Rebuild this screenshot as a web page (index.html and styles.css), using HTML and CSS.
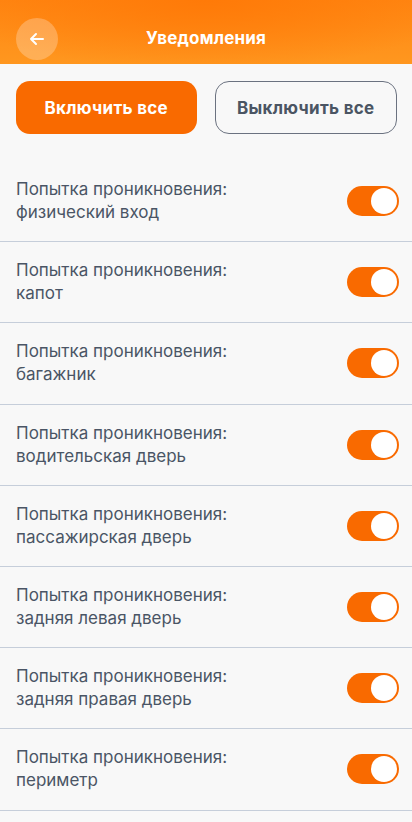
FILE: index.html
```html
<!DOCTYPE html>
<html lang="ru">
<head>
<meta charset="utf-8">
<link rel="stylesheet" href="styles.css">
</head>
<body>
<header class="topbar">
  <button class="back" aria-label="Назад">
    <svg width="18" height="18" viewBox="0 0 18 18" fill="none" stroke="#fff" stroke-width="2" stroke-linecap="round" stroke-linejoin="round"><path d="M15 9H3M8 4L3 9l5 5"/></svg>
  </button>
  <h1 class="title">Уведомления</h1>
</header>
<main class="content">
  <div class="actions">
    <button class="btn btn-primary">Включить все</button>
    <button class="btn btn-outline">Выключить все</button>
  </div>
  <ul class="list">
    <li class="row"><span class="label">Попытка проникновения:<br>физический вход</span><span class="toggle"><span class="knob"></span></span></li>
    <li class="row"><span class="label">Попытка проникновения:<br>капот</span><span class="toggle"><span class="knob"></span></span></li>
    <li class="row"><span class="label">Попытка проникновения:<br>багажник</span><span class="toggle"><span class="knob"></span></span></li>
    <li class="row"><span class="label">Попытка проникновения:<br>водительская дверь</span><span class="toggle"><span class="knob"></span></span></li>
    <li class="row"><span class="label">Попытка проникновения:<br>пассажирская дверь</span><span class="toggle"><span class="knob"></span></span></li>
    <li class="row"><span class="label">Попытка проникновения:<br>задняя левая дверь</span><span class="toggle"><span class="knob"></span></span></li>
    <li class="row"><span class="label">Попытка проникновения:<br>задняя правая дверь</span><span class="toggle"><span class="knob"></span></span></li>
    <li class="row"><span class="label">Попытка проникновения:<br>периметр</span><span class="toggle"><span class="knob"></span></span></li>
  </ul>
</main>
</body>
</html>
```
FILE: styles.css
```css
* { box-sizing: border-box; }
html, body { margin: 0; padding: 0; }
body {
  background: #f8f8f8;
  font-family: Inter, "Noto Sans", "Liberation Sans", sans-serif;
  width: 412px;
  height: 822px;
  overflow: hidden;
}
.topbar {
  height: 64px;
  background: radial-gradient(ellipse 260px 70px at 50% 0%, #ff7a08 0%, rgba(255,122,8,0) 100%),
              linear-gradient(to bottom, #ff8612 0%, #ff971f 100%);
  display: flex;
  align-items: flex-end;
  padding: 0 16px 4px;
  position: relative;
}
.back {
  width: 42px;
  height: 42px;
  border-radius: 50%;
  border: none;
  background: rgba(255,255,255,0.25);
  display: flex;
  align-items: center;
  justify-content: center;
  padding: 0;
  margin: 0;
}
.title {
  position: absolute;
  left: 0;
  right: 0;
  top: 28px;
  margin: 0;
  text-align: center;
  color: #fff;
  font-size: 17px;
  font-weight: 700;
  line-height: 20px;
  letter-spacing: 0.2px;
  pointer-events: none;
}
.content { padding: 17px 0 0; }
.actions {
  display: flex;
  gap: 18px;
  padding: 0 15px 0 16px;
}
.btn {
  flex: 1;
  height: 53px;
  border-radius: 14px;
  font-family: inherit;
  font-size: 17px;
  font-weight: 700;
  letter-spacing: 0.3px;
  margin: 0;
}
.btn-primary {
  background: #f96a00;
  color: #fff;
  border: none;
}
.btn-outline {
  background: transparent;
  color: #4b5563;
  border: 1.5px solid #6b7280;
}
.list {
  list-style: none;
  margin: 27px 0 0;
  padding: 0;
}
.row {
  height: 81.2px;
  border-bottom: 1px solid #c6ceda;
  display: flex;
  align-items: center;
  justify-content: space-between;
  padding: 0 13px 0 16px;
}
.label {
  color: #4a5565;
  font-size: 17px;
  line-height: 23px;
}
.toggle {
  width: 52px;
  height: 30px;
  border-radius: 15px;
  background: #f96a00;
  display: flex;
  align-items: center;
  justify-content: flex-end;
  padding: 0 2px;
}
.knob {
  width: 26px;
  height: 26px;
  border-radius: 50%;
  background: #fff;
}
```
